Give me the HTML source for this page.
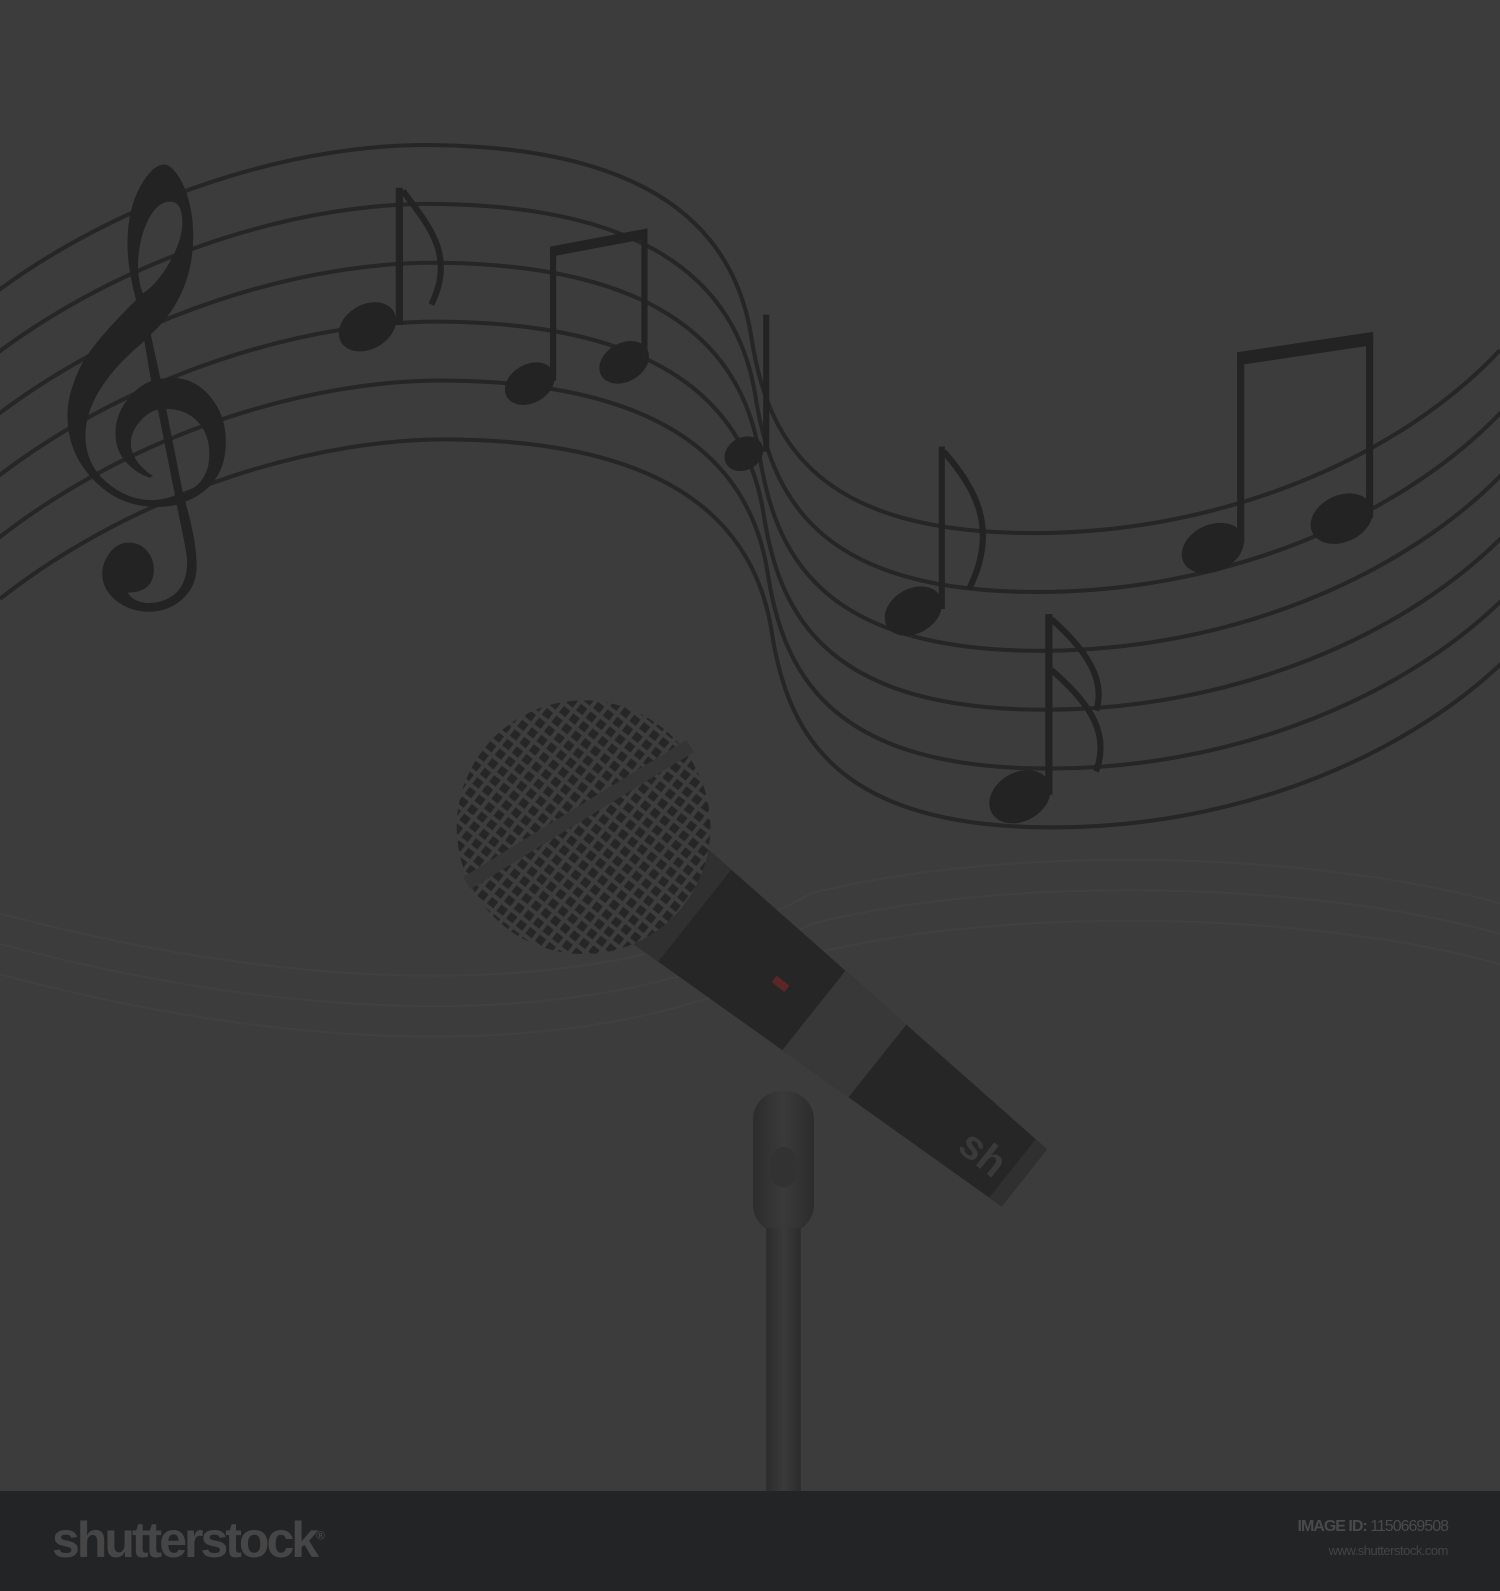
<!DOCTYPE html>
<html><head><style>
html,body{margin:0;padding:0;background:#3c3c3c;}
body{width:1500px;height:1591px;position:relative;overflow:hidden;font-family:"Liberation Sans",sans-serif;}
svg{position:absolute;left:0;top:0;}
#foot{position:absolute;left:0;top:1491px;width:1500px;height:100px;background:#232426;}
#logo{position:absolute;left:52px;top:20px;font-size:50px;font-weight:bold;color:#464646;letter-spacing:-3px;font-family:"Liberation Sans Narrow","Liberation Sans",sans-serif;}
#id{position:absolute;right:52px;top:27px;font-size:16px;color:#4a4a4a;letter-spacing:-1px;font-family:"Liberation Sans Narrow","Liberation Sans",sans-serif;}
#url{position:absolute;right:52px;top:52px;font-size:13px;color:#444;letter-spacing:-0.5px;font-family:"Liberation Sans Narrow","Liberation Sans",sans-serif;}
</style></head><body>
<svg width="1500" height="1491" viewBox="0 0 1478 1469" preserveAspectRatio="none">
<rect width="1478" height="1469" fill="#3c3c3c"/>
<g fill="none" stroke="#404040" stroke-width="2">
<path d="M0 900 C300 980 600 990 800 880 C1000 830 1300 840 1478 890"/>
<path d="M0 930 C300 1010 600 1020 800 910 C1000 860 1300 870 1478 920"/>
<path d="M0 960 C300 1040 600 1050 800 940 C1000 890 1300 900 1478 950"/>
</g>
<g fill="none" stroke="#262626" stroke-width="4">
<path id="l" d="M-20 300 C120 190 300 140 430 143 C620 146 720 210 740 330 C755 430 800 520 1000 525 C1200 530 1380 450 1478 345"/>
<use href="#l" transform="translate(4,58)"/>
<use href="#l" transform="translate(8,116)"/>
<use href="#l" transform="translate(12,174)"/>
<use href="#l" transform="translate(16,232)"/>
<use href="#l" transform="translate(20,290)"/>
</g>
<g fill="#232323" stroke="#232323">
<text x="22" y="495" font-size="370" font-family="DejaVu Sans" stroke="none">𝄞</text>
<ellipse cx="362" cy="322" rx="30" ry="22" transform="rotate(-30 362 322)" stroke="none"/>
<rect x="390" y="185" width="7" height="135" stroke="none"/>
<path d="M397 188 C420 220 450 250 425 300" fill="none" stroke-width="6"/>
<ellipse cx="522" cy="378" rx="26" ry="19" transform="rotate(-30 522 378)" stroke="none"/>
<ellipse cx="615" cy="357" rx="26" ry="19" transform="rotate(-30 615 357)" stroke="none"/>
<rect x="542" y="245" width="6" height="130" stroke="none"/>
<rect x="632" y="228" width="6" height="128" stroke="none"/>
<path d="M542 243 L638 225 L638 235 L542 253Z" stroke="none"/>
<ellipse cx="733" cy="447" rx="20" ry="16" transform="rotate(-30 733 447)" stroke="none"/>
<rect x="752" y="310" width="6" height="135" stroke="none"/>
<ellipse cx="900" cy="602" rx="30" ry="22" transform="rotate(-30 900 602)" stroke="none"/>
<rect x="925" y="440" width="6" height="160" stroke="none"/>
<path d="M930 445 C960 480 985 520 955 580" fill="none" stroke-width="6"/>
<ellipse cx="1195" cy="540" rx="32" ry="23" transform="rotate(-25 1195 540)" stroke="none"/>
<ellipse cx="1322" cy="511" rx="32" ry="23" transform="rotate(-25 1322 511)" stroke="none"/>
<rect x="1219" y="350" width="7" height="185" stroke="none"/>
<rect x="1346" y="330" width="7" height="180" stroke="none"/>
<path d="M1219 347 L1353 327 L1353 340 L1219 360Z" stroke="none"/>
<ellipse cx="1005" cy="785" rx="32" ry="24" transform="rotate(-30 1005 785)" stroke="none"/>
<rect x="1030" y="605" width="7" height="178" stroke="none"/>
<path d="M1036 610 C1070 640 1090 670 1080 700" fill="none" stroke-width="6"/>
<path d="M1036 660 C1070 690 1095 720 1080 760" fill="none" stroke-width="6"/>
</g>
<defs>
<pattern id="grid" width="12" height="12" patternUnits="userSpaceOnUse" patternTransform="rotate(38)">
<rect width="12" height="12" fill="#3d3d3d"/><rect x="2" y="2" width="8" height="8" fill="#262626"/>
</pattern>
<linearGradient id="st" x1="0" x2="1"><stop offset="0" stop-color="#2c2c2c"/><stop offset=".5" stop-color="#3a3a3a"/><stop offset="1" stop-color="#2c2c2c"/></linearGradient>
</defs>
<rect x="742" y="1075" width="60" height="140" rx="28" fill="url(#st)"/>
<rect x="755" y="1210" width="34" height="260" fill="url(#st)"/>
<ellipse cx="772" cy="1150" rx="14" ry="20" fill="#323232"/>
<g transform="translate(575 815) rotate(38.5)">
<path d="M100 -60 L555 -36 L555 36 L100 60Z" fill="#262626"/>
<path d="M100 -60 L140 -58 L140 58 L100 60Z" fill="#303030"/>
<path d="M290 -50 L370 -46 L370 46 L290 50Z" fill="#383838"/>
<path d="M540 -37 L555 -36 L555 36 L540 37Z" fill="#303030"/>
<text x="485" y="20" font-size="40" fill="#3a3a3a" font-weight="bold">sh</text>
<rect x="240" y="-4" width="16" height="8" fill="#5a2626"/>
</g>
<circle cx="575" cy="815" r="125" fill="url(#grid)"/>
<path d="M460 870 L680 735" stroke="#353535" stroke-width="14"/>
</svg>
<div id="foot">
<div id="logo">shutterstock<sup style="font-size:12px">®</sup></div>
<div id="id"><b>IMAGE ID:</b> 1150669508</div>
<div id="url">www.shutterstock.com</div>
</div>
</body></html>
